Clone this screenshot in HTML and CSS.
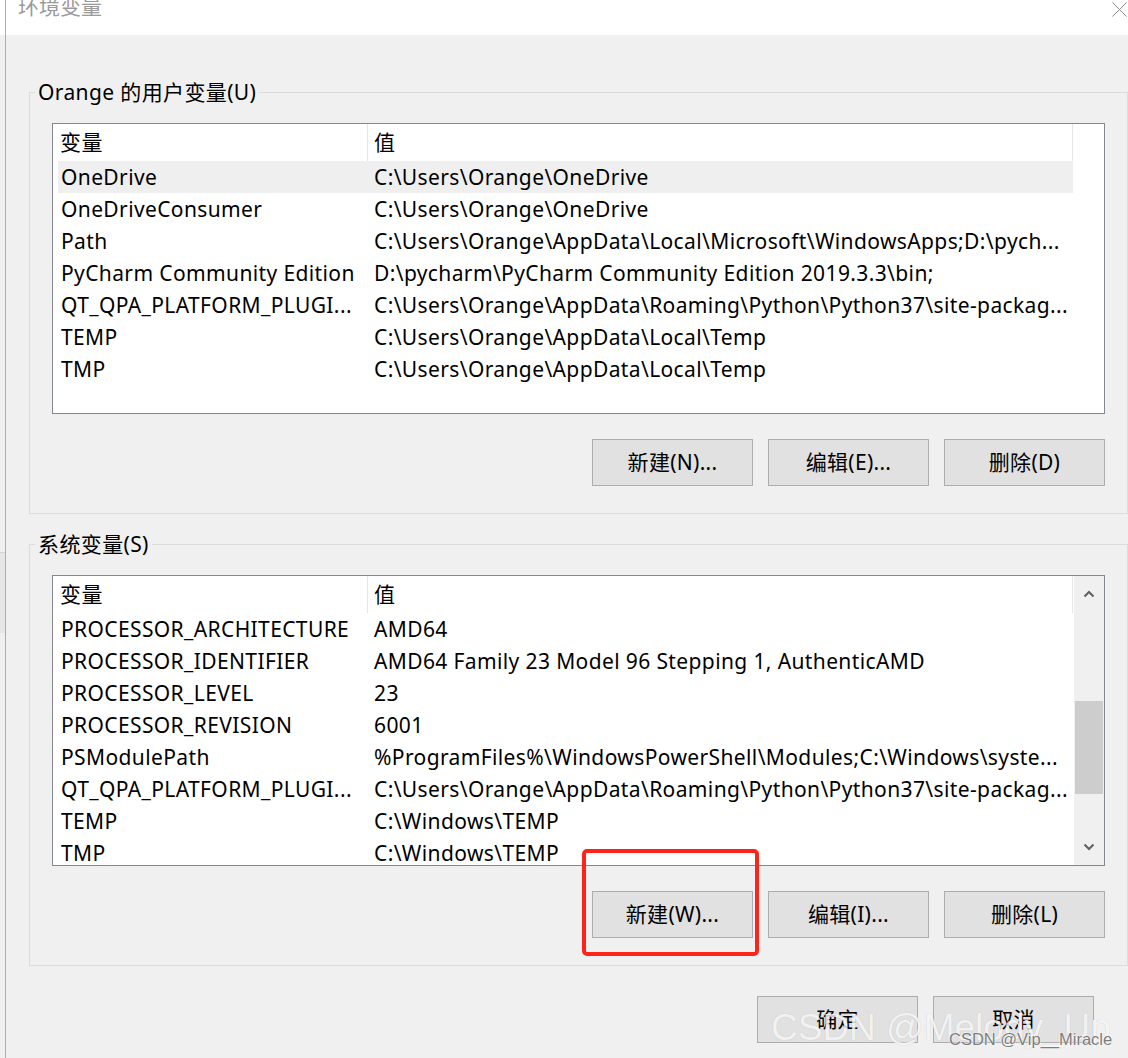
FILE: index.html
```html
<!DOCTYPE html>
<html lang="zh-CN">
<head>
<meta charset="utf-8">
<title>环境变量</title>
<link rel="stylesheet" href="styles.css">
</head>
<body>
<div class="screen">
  <div class="behind">
    <div class="bh-top"></div>
    <div class="bh-mid"></div>
    <div class="bh-dark"></div>
    <div class="bh-bot"></div>
  </div>
  <div class="window">
    <div class="titlebar">
      <span class="title">环境变量</span>
      <svg class="close" width="15" height="15" viewBox="0 0 15 15"><path d="M0.5 0.5 L14.5 14.5 M14.5 0.5 L0.5 14.5" stroke="#8a8a8a" stroke-width="1" fill="none"/></svg>
    </div>
    <div class="content">
      <fieldset class="group">
        <legend>Orange 的用户变量(U)</legend>
        <div class="listbox">
          <div class="list">
            <div class="list-head"><div class="hcell c1">变量</div><div class="hcell c2">值</div></div>
            <div class="row selected"><div class="cell c1">OneDrive</div><div class="cell c2">C:\Users\Orange\OneDrive</div></div>
            <div class="row"><div class="cell c1">OneDriveConsumer</div><div class="cell c2">C:\Users\Orange\OneDrive</div></div>
            <div class="row"><div class="cell c1">Path</div><div class="cell c2">C:\Users\Orange\AppData\Local\Microsoft\WindowsApps;D:\pych...</div></div>
            <div class="row"><div class="cell c1">PyCharm Community Edition</div><div class="cell c2">D:\pycharm\PyCharm Community Edition 2019.3.3\bin;</div></div>
            <div class="row"><div class="cell c1">QT_QPA_PLATFORM_PLUGI...</div><div class="cell c2">C:\Users\Orange\AppData\Roaming\Python\Python37\site-packag...</div></div>
            <div class="row"><div class="cell c1">TEMP</div><div class="cell c2">C:\Users\Orange\AppData\Local\Temp</div></div>
            <div class="row"><div class="cell c1">TMP</div><div class="cell c2">C:\Users\Orange\AppData\Local\Temp</div></div>
          </div>
        </div>
        <div class="btnrow">
          <button class="btn">新建(N)...</button>
          <button class="btn">编辑(E)...</button>
          <button class="btn">删除(D)</button>
        </div>
      </fieldset>

      <fieldset class="group group-sys">
        <legend>系统变量(S)</legend>
        <div class="listbox">
          <div class="list">
            <div class="list-head"><div class="hcell c1">变量</div><div class="hcell c2">值</div></div>
            <div class="row"><div class="cell c1">PROCESSOR_ARCHITECTURE</div><div class="cell c2">AMD64</div></div>
            <div class="row"><div class="cell c1">PROCESSOR_IDENTIFIER</div><div class="cell c2">AMD64 Family 23 Model 96 Stepping 1, AuthenticAMD</div></div>
            <div class="row"><div class="cell c1">PROCESSOR_LEVEL</div><div class="cell c2">23</div></div>
            <div class="row"><div class="cell c1">PROCESSOR_REVISION</div><div class="cell c2">6001</div></div>
            <div class="row"><div class="cell c1">PSModulePath</div><div class="cell c2">%ProgramFiles%\WindowsPowerShell\Modules;C:\Windows\syste...</div></div>
            <div class="row"><div class="cell c1">QT_QPA_PLATFORM_PLUGI...</div><div class="cell c2">C:\Users\Orange\AppData\Roaming\Python\Python37\site-packag...</div></div>
            <div class="row"><div class="cell c1">TEMP</div><div class="cell c2">C:\Windows\TEMP</div></div>
            <div class="row"><div class="cell c1">TMP</div><div class="cell c2">C:\Windows\TEMP</div></div>
          </div>
          <div class="scrollbar">
            <div class="sb-btn"><svg width="12" height="8" viewBox="0 0 12 8"><path d="M1.5 6.5 L6 2 L10.5 6.5" stroke="#606060" stroke-width="2" fill="none"/></svg></div>
            <div class="sb-track"><div class="sb-thumb"></div></div>
            <div class="sb-btn"><svg width="12" height="8" viewBox="0 0 12 8"><path d="M1.5 1.5 L6 6 L10.5 1.5" stroke="#606060" stroke-width="2" fill="none"/></svg></div>
          </div>
        </div>
        <div class="btnrow">
          <button class="btn">新建(W)...</button>
          <button class="btn">编辑(I)...</button>
          <button class="btn">删除(L)</button>
        </div>
      </fieldset>

      <div class="dialog-btns">
        <button class="btn">确定</button>
        <button class="btn">取消</button>
      </div>
    </div>
  </div>

  <div class="annot"></div>
  <div class="wm-big">CSDN @Melody_Up</div>
  <div class="wm-small">CSDN @Vip__Miracle</div>
</div>
</body>
</html>
```

FILE: styles.css
```css
html, body {
  margin: 0;
  padding: 0;
}
body {
  width: 1128px;
  height: 1058px;
  overflow: hidden;
  background: #ffffff;
  font-family: "Noto Sans", "Noto Sans CJK SC", sans-serif;
  font-size: 21px;
  letter-spacing: 0.38px;
  color: #000;
}
.screen {
  position: relative;
  display: flex;
  width: 1128px;
  height: 1058px;
}

/* what lies behind the dialog, at the left edge */
.behind {
  width: 5px;
  display: flex;
  flex-direction: column;
}
.bh-top { height: 35px; background: #ffffff; }
.bh-mid { height: 517px; background: #f0f0f0; border-bottom: 1px solid #d4d4d4; }
.bh-dark { height: 80px; background: #e6e6e6; }
.bh-bot { flex: 1; background: #f0f0f0; }

.window {
  flex: 1;
  min-width: 0;
  border-left: 1px solid #acacac;
  display: flex;
  flex-direction: column;
}
.titlebar {
  height: 35px;
  flex: none;
  background: #ffffff;
  display: flex;
  align-items: flex-start;
  padding-left: 12px;
  overflow: hidden;
}
.title {
  font-size: 21px;
  line-height: 24px;
  margin-top: -6px;
  color: #9a9a9a;
  letter-spacing: 0;
}
.close {
  margin-left: auto;
  margin-top: 2px;
  margin-right: 1px;
}

.content {
  flex: 1;
  background: #f0f0f0;
  padding: 43px 0 0 23px;
}

.group {
  width: 1099px;
  box-sizing: border-box;
  margin: 0;
  min-width: 0;
  border: 1px solid #dcdcdc;
  padding: 17px 22px 27px;
}
.group legend {
  font-size: 21px;
  line-height: 28px;
  padding: 0 3px;
  margin-left: -17px;
  margin-top: -1px;
}
.group-sys {
  margin-top: 16px;
}

.listbox {
  height: 291px;
  box-sizing: border-box;
  border: 1px solid #828790;
  background: #ffffff;
  display: flex;
  overflow: hidden;
}
.list {
  flex: 1;
  min-width: 0;
  overflow: hidden;
}
.list-head {
  display: flex;
  height: 37px;
}
.hcell {
  box-sizing: border-box;
  height: 37px;
  border-right: 1px solid #e5e5e5;
  line-height: 37px;
  white-space: nowrap;
}
.hcell.c1 { width: 315px; padding-left: 7px; }
.hcell.c2 { width: 705px; padding-left: 6px; }

.row {
  display: flex;
  height: 32px;
  width: 1015px;
  margin-left: 5px;
}
.row.selected {
  background: #efefef;
}
.cell {
  box-sizing: border-box;
  line-height: 32px;
  white-space: nowrap;
  overflow: hidden;
  text-overflow: ellipsis;
}
.cell.c1 { width: 310px; padding: 0 6px 0 3px; }
.cell.c2 { width: 705px; padding: 0 4px 0 6px; }

.scrollbar {
  width: 30px;
  flex: none;
  background: #f0f0f0;
  display: flex;
  flex-direction: column;
}
.sb-btn {
  height: 36px;
  display: flex;
  align-items: center;
  justify-content: center;
}
.sb-track {
  flex: 1;
}
.sb-thumb {
  margin: 89px 1px 0;
  height: 93px;
  background: #cdcdcd;
}

.btnrow {
  display: flex;
  justify-content: flex-end;
  gap: 15px;
  margin-top: 25px;
}
.btn {
  width: 161px;
  height: 47px;
  box-sizing: border-box;
  margin: 0;
  padding: 0;
  border: 1px solid #adadad;
  background: #e1e1e1;
  color: #000;
  font-family: "Noto Sans", "Noto Sans CJK SC", sans-serif;
  font-size: 21px;
  letter-spacing: 0.3px;
  line-height: 45px;
}

.dialog-btns {
  display: flex;
  justify-content: flex-end;
  gap: 15px;
  margin-top: 30px;
  padding-right: 34px;
}

/* annotation overlays */
.annot {
  position: absolute;
  left: 582px;
  top: 849px;
  width: 177px;
  height: 107px;
  box-sizing: border-box;
  border: 4px solid #ff2419;
  border-radius: 5px;
}
.wm-big {
  position: absolute;
  left: 771px;
  top: 1009px;
  font-family: "Liberation Sans", Arial, sans-serif;
  font-size: 37px;
  line-height: 37px;
  letter-spacing: 0;
  color: rgba(255, 255, 255, 0.82);
  text-shadow: 0 0 1px rgba(0, 0, 0, 0.18);
  white-space: nowrap;
}
.wm-small {
  position: absolute;
  left: 949px;
  top: 1031px;
  font-family: "Liberation Sans", Arial, sans-serif;
  font-size: 16.5px;
  line-height: 17px;
  letter-spacing: 0;
  color: #7c7c7c;
  text-shadow: 0 0 2px #ffffff, 0 0 1px #ffffff;
  white-space: nowrap;
}
```
